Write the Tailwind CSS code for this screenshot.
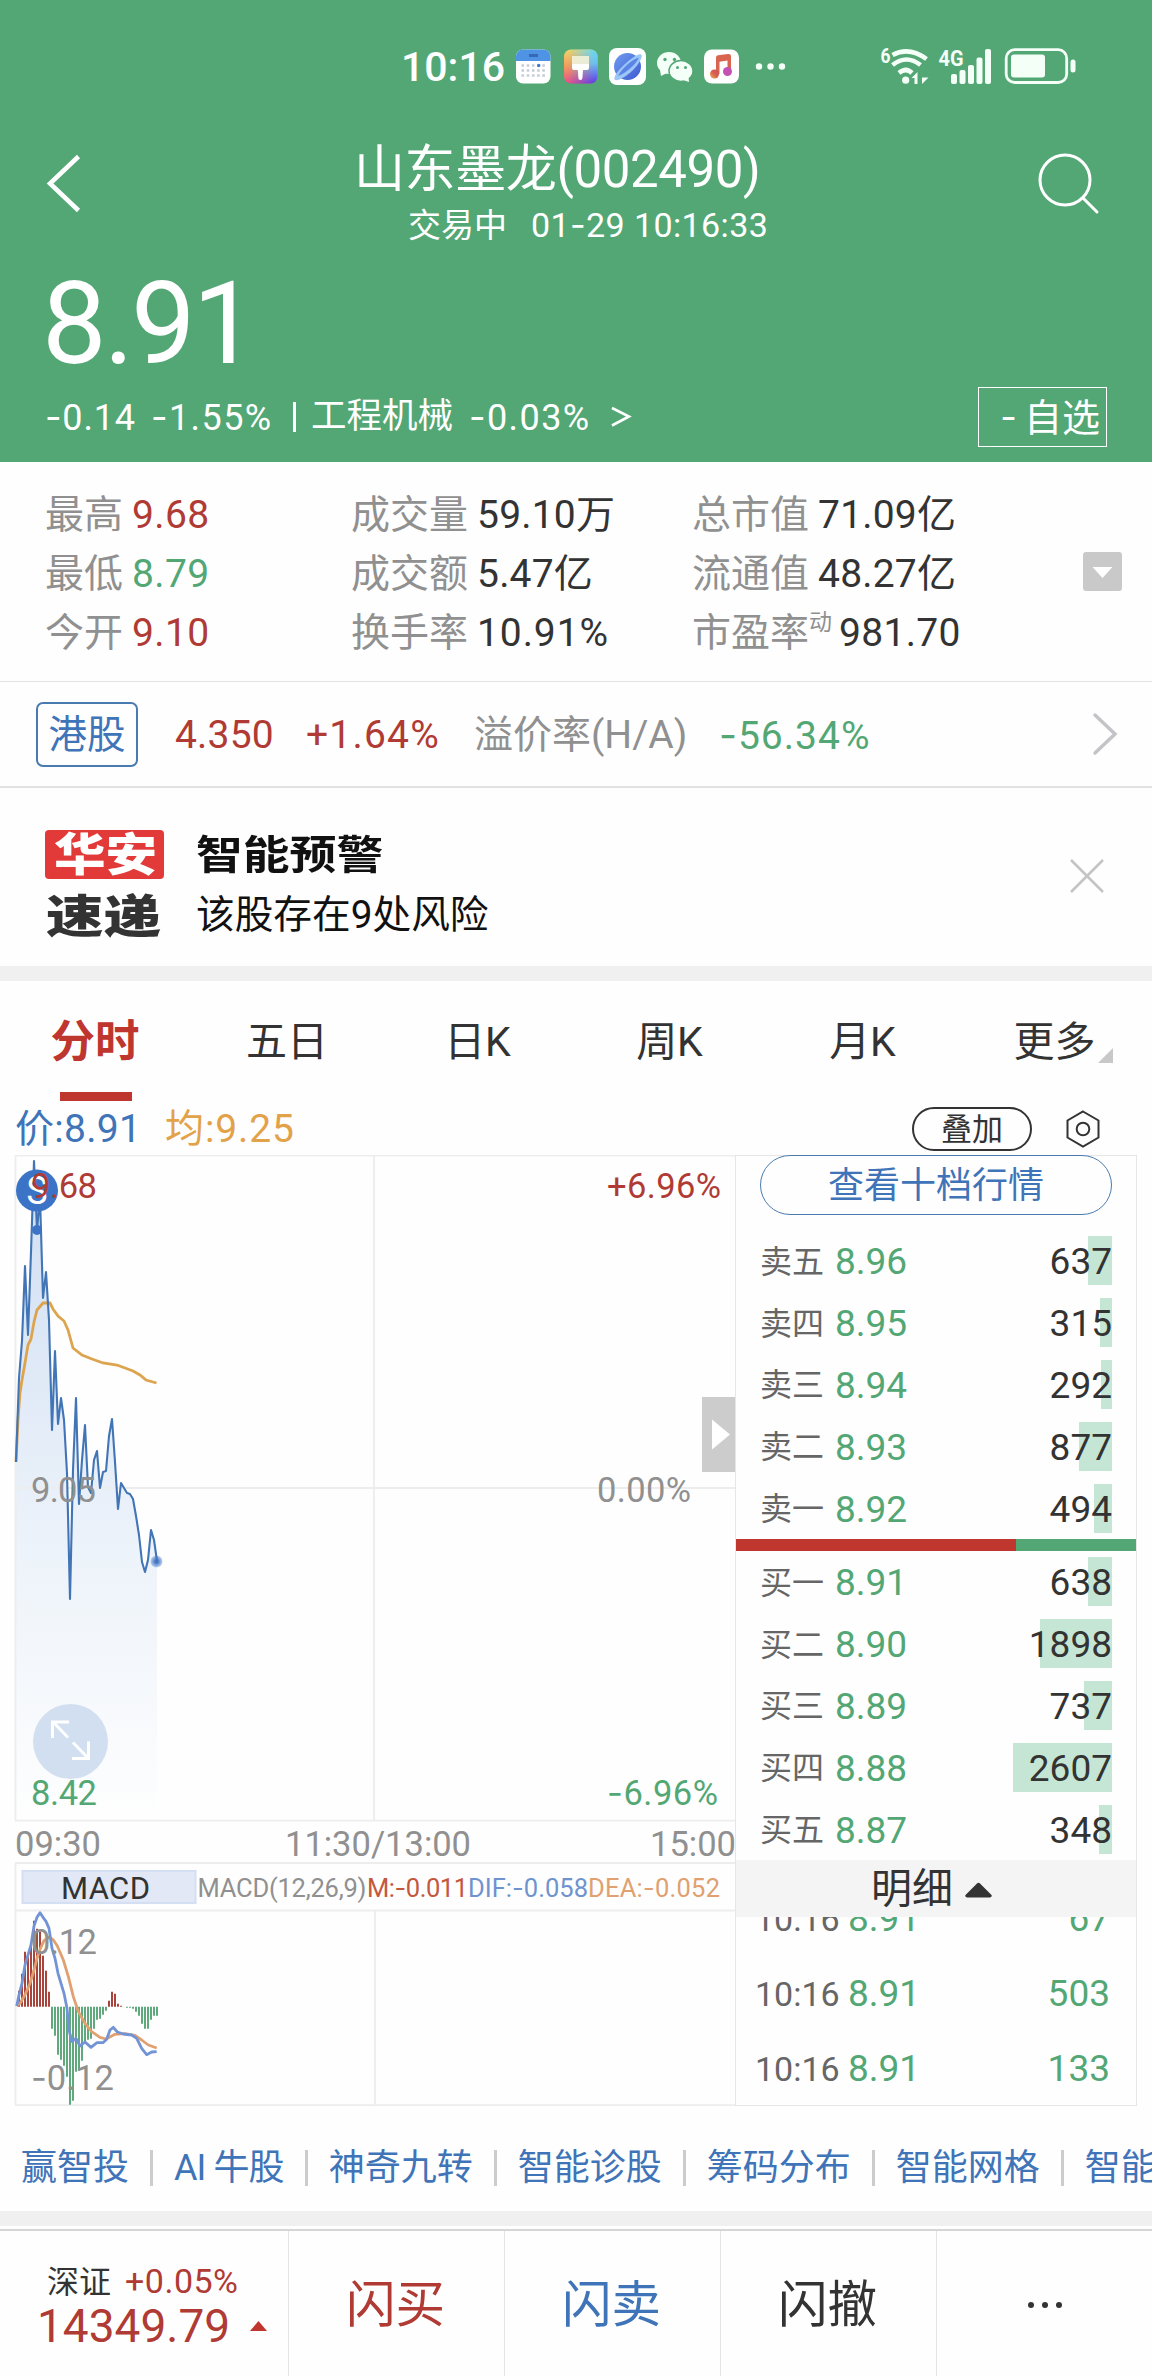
<!DOCTYPE html>
<html lang="zh-CN">
<head>
  <meta charset="UTF-8" />
  <meta name="viewport" content="width=device-width, initial-scale=1.0" />
  <title>山东墨龙(002490)</title>
  <script src="https://cdn.jsdelivr.net/npm/@tailwindcss/browser@4"></script>
</head>
<body class="w-[1152px] h-[2376px] overflow-hidden bg-[#fefefe] text-[#333] font-[Roboto,'Noto_Sans_CJK_SC',sans-serif] leading-none whitespace-nowrap">

  <!-- Header -->
  <header class="h-[462px] bg-[#53a775] text-white">
    <div class="h-[134px] flex items-center pl-[401px]">
      <span class="w-[115px] pt-px text-[41px] font-medium">10:16</span>
      <svg class="w-[274px] h-[40px]" viewBox="516 47 274 40">
        <defs>
          <linearGradient id="theme" x1="0" y1="0" x2="0" y2="1">
            <stop offset="0" stop-color="#f3d568" /><stop offset=".5" stop-color="#f39a5c" /><stop offset="1" stop-color="#e84f8c" />
          </linearGradient>
          <linearGradient id="themeRight" x1="0" y1="0" x2="0" y2="1">
            <stop offset="0" stop-color="#68d8ef" /><stop offset=".4" stop-color="#6cc0f0" /><stop offset="1" stop-color="#5a3be8" />
          </linearGradient>
          <linearGradient id="fade"><stop offset=".1" stop-color="#000" /><stop offset=".9" stop-color="#fff" /></linearGradient>
          <mask id="rightHalf"><rect x="564" y="49" width="34" height="36" fill="url(#fade)" /></mask>
          <linearGradient id="planet" x1="0" y1="0" x2="1" y2="1">
            <stop offset="0" stop-color="#6f9cf0" /><stop offset="1" stop-color="#3f5bd0" />
          </linearGradient>
          <linearGradient id="note" x1="0" y1="1" x2="1" y2="0">
            <stop offset="0" stop-color="#f0b050" /><stop offset=".5" stop-color="#d86050" /><stop offset="1" stop-color="#c85060" />
          </linearGradient>
        </defs>
        <!-- calendar -->
        <rect x="516" y="49.500" width="34.500" height="34" rx="7" fill="#fff" />
        <path d="M516 61v-4.500a7 7 0 0 1 7-7h20.500a7 7 0 0 1 7 7V61z" fill="#4f94e4" />
        <rect x="529" y="54" width="9" height="3" fill="#3768b4" />
        <path d="M521.500 65.500h25M521.500 70.500h25M521.500 75.500h25" stroke="#c6ccd6" stroke-width="2.600" stroke-dasharray="2.600 2.600" />
        <circle cx="538.700" cy="65.500" r="1.700" fill="#3f78d0" />
        <!-- theme -->
        <rect x="564" y="49.500" width="33.500" height="34" rx="7" fill="url(#theme)" />
        <rect x="564" y="49.500" width="33.500" height="34" rx="7" fill="url(#themeRight)" mask="url(#rightHalf)" />
        <rect x="572" y="56" width="17" height="9" fill="#f6f6dc" opacity=".85" />
        <path d="M572 64h17v4q0 2-2 2h-4l-.6 8a2 2 0 0 1-4 0l-.6-8H574q-2 0-2-2z" fill="#fff" />
        <!-- browser -->
        <rect x="609" y="48" width="37" height="37" rx="8" fill="#fff" />
        <circle cx="627.500" cy="66.500" r="13.500" fill="url(#planet)" />
        <path d="M614.500 79.500c-1.500-3 5-10.500 10.500-15.500s13-11 16-9.500-3 11-9 16.500-15.500 11.500-17.500 8.500z" fill="#9cc6f6" />
        <path d="M618 76c2.500-5 6-8.500 10-12s7.500-5.500 11-6.500c-2 4-4.500 7-8.500 10.500s-8 6.500-12.500 8z" fill="#5a84e8" />
        <!-- chat -->
        <ellipse cx="669" cy="63" rx="12" ry="11" fill="#f4fff8" />
        <path d="M660 70l1 6 6-3z" fill="#f4fff8" />
        <ellipse cx="681" cy="71" rx="12" ry="10.500" fill="#f4fff8" stroke="#53a775" stroke-width="1.500" />
        <path d="M683 80l6 2-.5-5z" fill="#f4fff8" />
        <g fill="#53a775">
          <circle cx="665" cy="59.500" r="1.700" /><circle cx="674.500" cy="59.500" r="1.700" />
          <circle cx="677.500" cy="67.500" r="1.500" /><circle cx="685.500" cy="67.500" r="1.500" />
        </g>
        <!-- music -->
        <rect x="704" y="49.500" width="35" height="34" rx="8" fill="#fff" />
        <path d="M716 57.500q0-2 2-2.200l10-1.300q3-.3 3 2v15h-3.500v-10.500l-8 1.200V74H716z" fill="#d9654f" />
        <circle cx="714.500" cy="74" r="4.500" fill="url(#note)" />
        <circle cx="727.500" cy="71.500" r="4.500" fill="#c452b4" />
        <g fill="#f4fff8"><circle cx="759" cy="66.500" r="3.200" /><circle cx="770.500" cy="66.500" r="3.200" /><circle cx="782" cy="66.500" r="3.200" /></g>
      </svg>
      <svg class="ml-[88px] w-[200px] h-[40px]" viewBox="878 47 200 40" fill="#f4fff8" font-weight="700">
        <text x="880.500" y="62.500" font-size="20" textLength="10" lengthAdjust="spacingAndGlyphs">6</text>
        <g fill="none" stroke="#f4fff8" stroke-width="4.600">
          <path d="M892.500 55q16.500-9 34 4M892.500 65q14-11 28 0M899 73q7-6 13 0" />
        </g>
        <circle cx="905.700" cy="80.200" r="3.600" />
        <path d="M911.500 78l6-6v12h-3v-6zM922 72.500v5h6.500l-6.500 6.500z" />
        <text x="938.500" y="66" font-size="22" textLength="25" lengthAdjust="spacingAndGlyphs">4G</text>
        <rect x="951" y="74" width="6" height="10" rx="2" /><rect x="959.500" y="70" width="6" height="14" rx="2" /><rect x="968" y="65" width="6" height="19" rx="2" /><rect x="976.500" y="57.500" width="6" height="26.500" rx="2" /><rect x="985" y="49" width="6" height="35" rx="2" />
        <rect x="1006.200" y="49.700" width="60.500" height="32.800" rx="8.500" fill="none" stroke="#f4fff8" stroke-width="2.800" />
        <rect x="1011" y="54.500" width="34" height="23" rx="3" />
        <rect x="1070.500" y="59.500" width="5" height="13" rx="2.500" />
      </svg>
    </div>

    <div class="h-[116px] flex">
      <svg class="ml-[44px] mt-[18px] w-[40px] h-[64px]" viewBox="0 0 40 64" fill="none" stroke="#fff" stroke-width="4.500"><path d="M34.500 4.500L6 31.500l28.500 27" /></svg>
      <div class="ml-[270px] w-[640px]">
        <h1 class="mt-[6px] h-[60px] leading-[60px] text-[51px] tracking-[-0.400px]">山东墨龙(002490)</h1>
        <p class="mt-[5px] pl-[54px] h-[40px] leading-[40px] text-[33px]">交易中<span class="ml-[24px] text-[34px] tracking-[0.400px]">01<span class="font-[Inter]">-</span>29 10:16:33</span></p>
      </div>
      <svg class="ml-[42px] mt-[16px] w-[66px] h-[66px]" viewBox="0 0 66 66" fill="none" stroke="#fff" stroke-width="3" stroke-linecap="round"><circle cx="29" cy="30" r="25" /><path d="M47 48l14 14" /></svg>
    </div>

    <div class="mt-[11px] pl-[42px] h-[126px] leading-[126px] text-[115px] tracking-[-3px]">8.91</div>

    <div class="h-[60px] flex items-center text-[36px]">
      <span class="ml-[45px] w-[106px] tracking-[0.800px]"><span class="font-[Inter]">-</span>0.14</span>
      <span class="w-[142px] tracking-[1.400px]"><span class="font-[Inter]">-</span>1.55%</span>
      <span class="w-[3px] h-[30px] mr-[15px] bg-white"></span>
      <span class="w-[158px] text-[35.500px]">工程机械</span>
      <span class="w-[141px] tracking-[1.400px]"><span class="font-[Inter]">-</span>0.03%</span>
      <svg class="w-[22px] h-[24px]" viewBox="0 0 22 24" fill="none" stroke="#fff" stroke-width="2.600"><path d="M2 3l17 8.500L2 20.500" /></svg>
      <button class="ml-[346px] w-[129px] h-[60px] border border-white flex items-center"><span class="pl-[14px] w-[45px] font-[Inter]">-</span><span class="pt-px text-[38px]">自选</span></button>
    </div>
  </header>

  <!-- Key figures -->
  <section class="relative h-[220px] border-b border-[#e4e4e4] pt-[24px] pl-[45px] grid grid-cols-[306px_341px_1fr] auto-rows-[59px] items-center content-start text-[39px]">
    <div class="text-[#909090]">最高<span class="ml-[9px] tracking-[0.400px] text-[#b03a34]">9.68</span></div>
    <div class="text-[#909090]">成交量<span class="ml-[9px] tracking-[0.200px] text-[#333]">59.10万</span></div>
    <div class="text-[#909090]">总市值<span class="ml-[9px] tracking-[0.200px] text-[#333]">71.09亿</span></div>
    <div class="text-[#909090]">最低<span class="ml-[9px] tracking-[0.400px] text-[#53a775]">8.79</span></div>
    <div class="text-[#909090]">成交额<span class="ml-[9px] tracking-[0.200px] text-[#333]">5.47亿</span></div>
    <div class="text-[#909090]">流通值<span class="ml-[9px] tracking-[0.200px] text-[#333]">48.27亿</span></div>
    <div class="text-[#909090]">今开<span class="ml-[9px] tracking-[0.400px] text-[#b03a34]">9.10</span></div>
    <div class="text-[#909090]">换手率<span class="ml-[9px] tracking-[0.900px] text-[#333]">10.91%</span></div>
    <div class="flex items-center text-[#909090]">市盈率<span class="text-[23px] pb-[22px]">动</span><span class="ml-[7px] tracking-[0.300px] text-[#333]">981.70</span></div>
    <svg class="absolute left-[1083px] top-[90px] w-[39px] h-[39px]" viewBox="0 0 39 39"><rect width="39" height="39" rx="3" fill="#c9c9c9" /><path d="M9.500 15h20l-10 11z" fill="#fff" /></svg>
  </section>

  <!-- HK share -->
  <section class="h-[106px] border-b-2 border-[#e2e2e2] flex items-center text-[39px]">
    <span class="ml-[36px] w-[102px] h-[65px] rounded-[7px] border-2 border-[#4a7bb0] pt-[2px] flex items-center justify-center text-[38.500px] text-[#3f74b8]">港股</span>
    <span class="ml-[37px] w-[131px] pt-[2px] tracking-[0.200px] text-[#b03a34]">4.350</span>
    <span class="w-[168px] pt-[2px] tracking-[1.200px] text-[#b03a34]">+1.64%</span>
    <span class="w-[245px] pt-[2px] text-[#909090]">溢价率(H/A)</span>
    <span class="w-[373px] pt-[2px] tracking-[1px] text-[#53a775]"><span class="font-[Inter]">-</span>56.34%</span>
    <svg class="w-[26px] h-[44px]" viewBox="0 0 26 44" fill="none" stroke="#c4c4c8" stroke-width="3.500" stroke-linecap="round"><path d="M3 3l20 19L3 41" /></svg>
  </section>

  <!-- Risk alert -->
  <section class="h-[178px] flex text-[#111]">
    <svg class="ml-[45px] mt-[42px] w-[120px] h-[112px]" viewBox="0 0 120 112" font-weight="900" font-size="45">
      <rect width="119" height="49" rx="4" fill="#e23a38" />
      <text x="9" y="41" fill="#fff" textLength="103" lengthAdjust="spacingAndGlyphs">华安</text>
      <text x="1" y="103" fill="#333" textLength="115" lengthAdjust="spacingAndGlyphs">速递</text>
    </svg>
    <div class="ml-[31px] w-[873px]">
      <h2 class="mt-[42px] h-[52px] leading-[52px] text-[40px] font-bold origin-left scale-x-[1.170]">智能预警</h2>
      <p class="mt-[7px] h-[52px] leading-[52px] text-[38.700px]">该股存在9处风险</p>
    </div>
    <svg class="mt-[70px] w-[36px] h-[36px]" viewBox="0 0 36 36" stroke="#c4c4c4" stroke-width="2.500"><path d="M2 2l32 32M34 2L2 34" /></svg>
  </section>
  <div class="h-[15px] bg-[#f0f0f0]"></div>

  <!-- Period tabs -->
  <nav class="h-[120px] grid grid-cols-6 text-center text-[41px] leading-[123px]">
    <div class="flex flex-col items-center text-[#bf362e] font-bold text-[44.500px]"><span class="h-[111px] pr-[2px]">分时</span><span class="w-[72px] h-[9px] bg-[#bf362e]"></span></div>
    <div class="pr-[2px]">五日</div>
    <div class="pr-[5px]">日K</div>
    <div class="pr-[5px]">周K</div>
    <div class="pr-[3px]">月K</div>
    <div class="flex justify-center items-end pl-[14px]">更多<svg class="mb-[41px] ml-[2px] w-[15px] h-[15px]" viewBox="0 0 15 15"><path d="M15 0v15H0z" fill="#c8c8c8" /></svg></div>
  </nav>

  <div class="h-[54px] pt-[2px] flex items-center text-[39px]">
    <span class="ml-[15px] w-[150px] tracking-[0.300px] text-[#3f74b8]">价:8.91</span>
    <span class="tracking-[0.900px] text-[#e2a24a]">均:9.25</span>
    <span class="ml-auto w-[120px] h-[44px] rounded-full border-2 border-[#333] pt-px flex items-center justify-center text-[31px]">叠加</span>
    <svg class="ml-[33px] mr-[51px] w-[36px] h-[38px]" viewBox="0 0 36 38" fill="none" stroke="#333" stroke-width="2"><path d="M18 1.500l15.500 9v17L18 36.500l-15.500-9v-17z" /><circle cx="18" cy="19" r="6.300" /></svg>
  </div>

  <!-- Charts and order book -->
  <section class="h-[951px] flex">
    <svg id="chart" class="w-[735px] h-[951px]" viewBox="0 1155 735 951" fill="none">
      <defs>
        <linearGradient id="area" gradientUnits="userSpaceOnUse" x1="0" y1="1155" x2="0" y2="1820">
          <stop offset="0" stop-color="#cfdef3" /><stop offset=".6" stop-color="#edf3fa" /><stop offset="1" stop-color="#fefefe" />
        </linearGradient>
        <radialGradient id="glow"><stop offset=".2" stop-color="#3f74c4" /><stop offset="1" stop-color="#3f74c4" stop-opacity=".3" /></radialGradient>
      </defs>
      <path id="priceArea" fill="url(#area)" />
      <g stroke="#ededed" stroke-width="1.800">
        <path d="M15.500 1155.500V1821M15.500 1863V2105M15 1155.500H735M15 1488H735M374 1155V1821M15 1820.700H735M15 1863H735M15 1910.500H735M375 1911V2105M15 2105.200H735" />
      </g>
      <polyline id="priceAvg" stroke="#dda44f" stroke-width="2.800" />
      <polyline id="priceLine" stroke="#4275b5" stroke-width="2.100" stroke-linejoin="round" />
      <circle cx="156.500" cy="1561.500" r="6" fill="url(#glow)" />
      <circle cx="37" cy="1190.500" r="21" fill="#3b74c6" />
      <circle cx="37" cy="1230" r="5" fill="#3b74c6" />
      <text x="26.500" y="1203.500" font-size="38" textLength="21" lengthAdjust="spacingAndGlyphs" fill="#fff">S</text>
      <circle cx="70.500" cy="1741.500" r="37.500" fill="#d1dff0" />
      <path d="M52.500 1738v-16H69M53 1722l15 15.500M88.500 1741.500v17H72M88 1758l-15-15.500" stroke="#fff" stroke-width="3" />
      <rect x="702" y="1397" width="33" height="75" fill="#ccc" />
      <path d="M712 1419.500v30l18-15z" fill="#fff" />
      <g id="macdBars" stroke-width="2"></g>
      <polyline id="dea" stroke="#e0a070" stroke-width="2.800" stroke-linejoin="round" />
      <polyline id="dif" stroke="#7294d6" stroke-width="2.800" stroke-linejoin="round" />
      <rect x="22.500" y="1871" width="173" height="32" fill="#e2e8f5" stroke="#d4dff4" stroke-width="2" />
      <g font-size="34.500" fill="#909090">
        <text x="31" y="1197.700" textLength="66" fill="#b03a34">9.68</text>
        <text x="607" y="1198" textLength="114" fill="#b03a34">+6.96%</text>
        <text x="31" y="1502" textLength="65">9.05</text>
        <text x="597" y="1502" textLength="94">0.00%</text>
        <text x="31" y="1805" textLength="66" fill="#53a775">8.42</text>
        <text x="607" y="1805" textLength="111" fill="#53a775"><tspan font-family="Inter">-</tspan>6.96%</text>
        <text x="15" y="1856" textLength="86">09:30</text>
        <text x="285" y="1856" textLength="186">11:30/13:00</text>
        <text x="650" y="1856" textLength="86">15:00</text>
        <text x="31" y="1954" textLength="66">0.12</text>
        <text x="31" y="2090" textLength="83"><tspan font-family="Inter">-</tspan>0.12</text>
      </g>
      <text x="61" y="1899" font-size="31" textLength="89" fill="#333">MACD</text>
      <g font-size="25.500">
        <text x="197.500" y="1897" textLength="169" fill="#909090">MACD(12,26,9)</text>
        <text x="367" y="1897" textLength="101" fill="#c4573c">M:<tspan font-family="Inter">-</tspan>0.011</text>
        <text x="468" y="1897" textLength="120" fill="#6f93cf">DIF:<tspan font-family="Inter">-</tspan>0.058</text>
        <text x="588" y="1897" textLength="132" fill="#e0a070">DEA:<tspan font-family="Inter">-</tspan>0.052</text>
      </g>
    </svg>

    <div class="w-[402px] h-[951px] border border-[#e6e6e6]">
      <div class="ml-[24px] -mt-px w-[352px] h-[60px] rounded-full border-[1.500px] border-[#4a7bb0] pt-[2px] flex items-center justify-center text-[36px] text-[#3f74b8]">查看十档行情</div>
      <div id="asks" class="mt-[15px] h-[309px]"></div>
      <div class="h-[12px] flex"><span class="w-[280px] bg-[#bf362e]"></span><span class="flex-1 bg-[#53a775]"></span></div>
      <div id="bids" class="h-[309px]"></div>
      <div class="h-[57px] pt-[2px] bg-[#f4f4f4] flex items-center pl-[135px] text-[41px]">明细<svg class="ml-[12px] w-[27px] h-[16px]" viewBox="0 0 27 16"><path d="M2 15.500q-3-1-1-3L12 1.500q1.500-1.500 3 0l11 11q2 2-1 3z" fill="#333" /></svg></div>
      <div class="h-[188px] overflow-hidden"><div id="ticks" class="-mt-[36px]"></div></div>
    </div>
  </section>

  <!-- Tool links -->
  <div class="w-[1152px] h-[105px] pt-[44px] pl-[21px] flex gap-[21px] text-[36px] leading-[36px] text-[#3f74b8] overflow-hidden">
    <span>赢智投</span><i class="shrink-0 w-[3px] h-[36px] bg-[#ccc]"></i>
    <span class="tracking-[-0.900px]">AI 牛股</span><i class="shrink-0 w-[3px] h-[36px] bg-[#ccc]"></i>
    <span>神奇九转</span><i class="shrink-0 w-[3px] h-[36px] bg-[#ccc]"></i>
    <span>智能诊股</span><i class="shrink-0 w-[3px] h-[36px] bg-[#ccc]"></i>
    <span>筹码分布</span><i class="shrink-0 w-[3px] h-[36px] bg-[#ccc]"></i>
    <span>智能网格</span><i class="shrink-0 w-[3px] h-[36px] bg-[#ccc]"></i>
    <span>智能</span>
  </div>
  <div class="h-[15px] bg-[#f0f0f0]"></div>

  <!-- Trade bar -->
  <footer class="mt-[3px] h-[147px] border-t-2 border-[#d6d6d6] grid grid-cols-[289px_216px_216px_216px_1fr] text-[49.500px] text-center leading-[148px]">
    <div class="border-r border-[#e4e4e4] text-left leading-none">
      <div class="mt-[32px] ml-[47px] h-[36px] leading-[36px] text-[32px]">深证<span class="ml-[14px] tracking-[0.500px] text-[34px] text-[#b03a34]">+0.05%</span></div>
      <div class="mt-[3px] ml-[37px] h-[48px] flex items-center text-[46px] text-[#b03a34]">14349.79<svg class="ml-[20px] w-[17px] h-[10px]" viewBox="0 0 17 10"><path d="M8.500 0L17 10H0z" fill="#bf362e" /></svg></div>
    </div>
    <div class="border-r border-[#e4e4e4] pr-[2px] text-[#b03a34]">闪买</div>
    <div class="border-r border-[#e4e4e4] pr-[2px] text-[#3f74b8]">闪卖</div>
    <div class="border-r border-[#e4e4e4] pr-[2px]">闪撤</div>
    <div class="flex items-center justify-center gap-[8px]"><i class="size-[6px] rounded-full bg-[#333]"></i><i class="size-[6px] rounded-full bg-[#333]"></i><i class="size-[6px] rounded-full bg-[#333]"></i></div>
  </footer>

  <script>
    // one price per minute from 09:30, in chart pixels
    const price = [1462, 1378, 1341, 1266, 1335, 1252, 1161, 1230, 1197, 1298, 1272, 1320, 1430, 1351, 1424, 1398, 1420, 1473, 1599, 1470, 1398, 1504, 1460, 1425, 1487, 1493, 1460, 1451, 1488, 1472, 1471, 1436, 1419, 1462, 1509, 1483, 1488, 1493, 1494, 1499, 1516, 1535, 1562, 1572, 1560, 1530, 1540, 1561];
    const points = price.map((y, i) => `${16 + i * 3},${y}`);
    document.getElementById("priceLine").setAttribute("points", points.join(" "));
    document.getElementById("priceArea").setAttribute("d", `M16,1820 L${points.join(" L")} L157,1820 Z`);
    document.getElementById("priceAvg").setAttribute("points", "16,1462 18,1420 20,1393 22,1380 25,1363 28,1345 31,1339 34,1322 37,1310 43,1303 50,1303 53,1309 58,1316 64,1321 68,1330 73,1348 82,1355 92,1359 103,1363 117,1365 133,1371 140,1375 146,1380 156.500,1383");

    const macd = [16, 33, 55, 53, 63, 86, 78, 75, 51, 36, 15, -22, -29, -48, -53, -59, -70, -98, -94, -65, -64, -54, -35, -33, -32, -22, -13, -12, -8, -4, 6, 15, 13, 3, 1, 0, -1, -1, -2, -5, -9, -17, -22, -22, -13, -9, -9];
    document.getElementById("macdBars").innerHTML = macd
      .map((h, i) => `<path d="M${19 + i * 3} 2006.700v${-h}" stroke="${h > 0 ? "#a8443c" : "#5fa97c"}" />`)
      .join("");
    const curve = (id, list) =>
      document.getElementById(id).setAttribute("points", list.map(([x, y]) => `${x / 3},${1820 + y / 3}`).join(" "));
    curve("dif", [[50, 558], [57, 525], [66, 490], [75, 435], [84, 405], [93, 375], [102, 318], [111, 292], [120, 278], [129, 292], [138, 304], [147, 325], [156, 385], [165, 415], [174, 460], [183, 490], [192, 520], [201, 565], [207, 630], [216, 665], [228, 655], [240, 678], [255, 666], [273, 682], [291, 668], [309, 668], [320, 658], [330, 630], [340, 622], [352, 636], [370, 642], [395, 645], [410, 655], [425, 685], [440, 704], [455, 696], [470, 695]]);
    curve("dea", [[50, 558], [60, 550], [75, 525], [90, 490], [102, 450], [111, 415], [120, 388], [132, 362], [147, 351], [160, 360], [172, 378], [190, 420], [205, 470], [220, 530], [235, 575], [255, 610], [275, 635], [300, 652], [318, 657], [345, 643], [375, 641], [405, 646], [425, 660], [445, 675], [470, 684]]);

    const level = ([label, p, vol, w]) => `
      <div class="h-[61.800px] pl-[24px] pr-[24px] flex items-center text-[37px]">
        <span class="w-[75px] pt-[2px] text-[32px] text-[#666]">${label}</span>
        <span class="pt-[2px] text-[#53a775]">${p}</span>
        <span class="relative ml-auto h-[49px] leading-[51px] text-[#333]">
          <i class="absolute right-0 top-0 h-[49px] bg-[#c6e6d5]" style="width:${w}px"></i>
          <span class="relative">${vol}</span>
        </span>
      </div>`;
    document.getElementById("asks").innerHTML = [
      ["卖五", "8.96", 637, 24], ["卖四", "8.95", 315, 12], ["卖三", "8.94", 292, 11], ["卖二", "8.93", 877, 33], ["卖一", "8.92", 494, 18],
    ].map(level).join("");
    document.getElementById("bids").innerHTML = [
      ["买一", "8.91", 638, 24], ["买二", "8.90", 1898, 72], ["买三", "8.89", 737, 28], ["买四", "8.88", 2607, 99], ["买五", "8.87", 348, 13],
    ].map(level).join("");
    document.getElementById("ticks").innerHTML = [67, 503, 133].map((vol) => `
      <div class="h-[75px] pl-[19px] pr-[26px] flex items-center text-[37px] text-[#53a775]">
        <span class="w-[93px] text-[34px] text-[#666]">10:16</span><span>8.91</span><span class="ml-auto">${vol}</span>
      </div>`).join("");
  </script>
</body>
</html>
